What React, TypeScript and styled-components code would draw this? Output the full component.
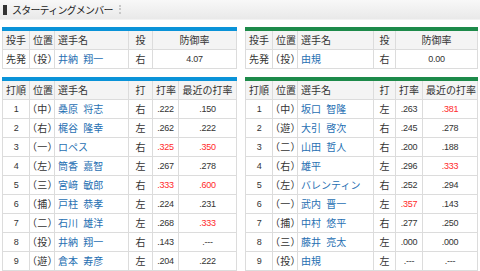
import React from "react";
import styled, { createGlobalStyle } from "styled-components";

const Global = createGlobalStyle`
  html, body { margin: 0; padding: 0; background: #fff; }
  body { font-family: "Noto Sans CJK JP", "Noto Sans", sans-serif; color: #333; }
`;

const Page = styled.div`
  width: 480px;
  height: 271px;
  overflow: hidden;
  display: flex;
  flex-direction: column;
`;

const TitleBar = styled.div`
  height: 19px;
  display: flex;
  align-items: center;
  padding-left: 3px;
  background: linear-gradient(#f8f8f8, #e9e9e9);
  border-bottom: 1px solid #f2f2f2;
`;

const Marker = styled.span`
  width: 4px;
  height: 10px;
  background: #333;
  margin-right: 5px;
`;

const Title = styled.span`
  font-size: 10px;
  letter-spacing: -0.8px;
  color: #222;
  line-height: 1;
`;

const Dots = styled.span`
  margin-left: 6px;
  width: 0;
  height: 9px;
  border-left: 2px dotted #c8c8c8;
`;

const Grid = styled.div`
  display: grid;
  grid-template-columns: 234px 232px;
  column-gap: 9px;
  padding: 7px 0 0 2px;
  row-gap: 8px;
`;

const Table = styled.table<{ $color: string }>`
  border-collapse: collapse;
  table-layout: fixed;
  width: 100%;
  border-top: 4px solid ${(p) => p.$color};
  font-size: 10px;
`;

const HeadCell = styled.th<{ $left?: boolean }>`
  background: #f4f4f4;
  font-weight: normal;
  height: 18px;
  padding: 0 3px;
  border: 1px solid #dcdcdc;
  border-top: none;
  text-align: ${(p) => (p.$left ? "left" : "center")};
  color: #333;
  white-space: nowrap;
  line-height: 1;
  overflow: hidden;
`;

const Cell = styled.td<{ $align?: "left" | "center"; $red?: boolean; $num?: boolean; $name?: boolean; $pos?: boolean }>`
  height: 18px;
  padding: 0 ${(p) => (p.$pos ? "2px" : "3px")};
  border: 1px solid #dcdcdc;
  text-align: ${(p) => p.$align || "center"};
  color: ${(p) => (p.$red ? "#ff2a2a" : p.$name ? "#1f6fb2" : "#333")};
  font-size: ${(p) => (p.$num ? "9px" : "10px")};
  font-family: ${(p) => (p.$num ? '"Liberation Sans", Arial, sans-serif' : "inherit")};
  letter-spacing: ${(p) => (p.$num ? "-0.3px" : p.$pos ? "0.3px" : "0")};
  word-spacing: ${(p) => (p.$name ? "3px" : "0")};
  font-feature-settings: ${(p) => (p.$pos ? '"halt"' : "normal")};
  white-space: pre;
  line-height: 1;
  overflow: hidden;
`;

type Batter = [string, string, string, string, string, string];

const left: Batter[] = [
  ["1", "（中）", "桑原 将志", "右", ".222", ".150"],
  ["2", "（右）", "梶谷 隆幸", "左", ".262", ".222"],
  ["3", "（一）", "ロペス", "右", ".325", ".350"],
  ["4", "（左）", "筒香 嘉智", "左", ".267", ".278"],
  ["5", "（三）", "宮﨑 敏郎", "右", ".333", ".600"],
  ["6", "（捕）", "戸柱 恭孝", "左", ".224", ".231"],
  ["7", "（二）", "石川 雄洋", "左", ".268", ".333"],
  ["8", "（投）", "井納 翔一", "右", ".143", ".---"],
  ["9", "（遊）", "倉本 寿彦", "左", ".204", ".222"],
];

const right: Batter[] = [
  ["1", "（中）", "坂口 智隆", "左", ".263", ".381"],
  ["2", "（遊）", "大引 啓次", "右", ".245", ".278"],
  ["3", "（二）", "山田 哲人", "右", ".200", ".188"],
  ["4", "（右）", "雄平", "左", ".296", ".333"],
  ["5", "（左）", "バレンティン", "右", ".252", ".294"],
  ["6", "（一）", "武内 晋一", "左", ".357", ".143"],
  ["7", "（捕）", "中村 悠平", "右", ".277", ".250"],
  ["8", "（三）", "藤井 亮太", "左", ".000", ".000"],
  ["9", "（投）", "由規", "左", ".---", ".---"],
];

const isRed = (v: string) => {
  const n = parseFloat(v);
  return !isNaN(n) && n >= 0.3;
};

const Cols = ({ w }: { w: number[] }) => (
  <colgroup>
    {w.map((x, i) => (
      <col key={i} style={{ width: x }} />
    ))}
  </colgroup>
);

const PitcherTable = ({ color, name, era, w }: { color: string; name: string; era: string; w: number[] }) => (
  <Table $color={color}>
    <Cols w={w} />
    <thead>
      <tr>
        <HeadCell>投手</HeadCell>
        <HeadCell>位置</HeadCell>
        <HeadCell $left>選手名</HeadCell>
        <HeadCell>投</HeadCell>
        <HeadCell colSpan={2}>防御率</HeadCell>
      </tr>
    </thead>
    <tbody>
      <tr>
        <Cell>先発</Cell>
        <Cell $align="left" $pos>（投）</Cell>
        <Cell $align="left" $name>{name}</Cell>
        <Cell>右</Cell>
        <Cell colSpan={2} $num>{era}</Cell>
      </tr>
    </tbody>
  </Table>
);

const BatTable = ({ color, rows, w }: { color: string; rows: Batter[]; w: number[] }) => (
  <Table $color={color}>
    <Cols w={w} />
    <thead>
      <tr>
        <HeadCell>打順</HeadCell>
        <HeadCell>位置</HeadCell>
        <HeadCell $left>選手名</HeadCell>
        <HeadCell>打</HeadCell>
        <HeadCell>打率</HeadCell>
        <HeadCell>最近の打率</HeadCell>
      </tr>
    </thead>
    <tbody>
      {rows.map((r) => (
        <tr key={r[0]}>
          <Cell $num>{r[0]}</Cell>
          <Cell $align="left" $pos>{r[1]}</Cell>
          <Cell $align="left" $name>{r[2]}</Cell>
          <Cell>{r[3]}</Cell>
          <Cell $num $red={isRed(r[4])}>{r[4]}</Cell>
          <Cell $num $red={isRed(r[5])}>{r[5]}</Cell>
        </tr>
      ))}
    </tbody>
  </Table>
);

const wl = [27, 25, 74, 24, 26, 58];
const wr = [27, 25, 76, 22, 27, 55];

export default function App() {
  return (
    <Page>
      <Global />
      <TitleBar>
        <Marker />
        <Title>スターティングメンバー</Title>
        <Dots />
      </TitleBar>
      <Grid>
        <PitcherTable color="#0a93d8" name="井納 翔一" era="4.07" w={wl} />
        <PitcherTable color="#1d8a4a" name="由規" era="0.00" w={wr} />
        <BatTable color="#0a93d8" rows={left} w={wl} />
        <BatTable color="#1d8a4a" rows={right} w={wr} />
      </Grid>
    </Page>
  );
}
